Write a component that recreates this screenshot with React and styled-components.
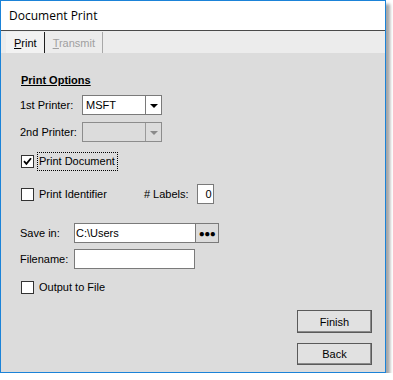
import React from "react";
import styled, { createGlobalStyle } from "styled-components";

const GlobalStyle = createGlobalStyle`
  html, body {
    margin: 0;
    padding: 0;
    background: #ffffff;
  }
  body {
    font-family: "Liberation Sans", Arial, sans-serif;
    font-size: 11px;
    color: #000;
  }
`;

const Window = styled.div`
  width: 384px;
  height: 371px;
  border: 1px solid #1b83d8;
  background: #dcdcdc;
  box-shadow: 4px 4px 3px rgba(0, 0, 0, 0.35);
  display: flex;
  flex-direction: column;
`;

const TitleBar = styled.div`
  height: 30px;
  background: #ffffff;
  border-bottom: 1px solid #4a4a4a;
  display: flex;
  align-items: center;
  padding-left: 8px;
  font-family: "Open Sans", "Liberation Sans", sans-serif;
  font-size: 12px;
  color: #000;
`;

const TabStrip = styled.div`
  height: 22px;
  background: #ececec;
  display: flex;
  align-items: stretch;
  padding-left: 5px;
`;

const Tab = styled.div`
  display: flex;
  align-items: center;
  padding: 0 7px 0 8px;
  border-right: 1px solid ${(p) => (p.$active ? "#1e1e1e" : "#a8a8a8")};
  background: ${(p) => (p.$active ? "#f2f2f2" : "transparent")};
  color: ${(p) => (p.$active ? "#000" : "#a0a0a0")};
  margin: 1px 0 0;
  font-size: 11px;
  u {
    text-decoration: underline;
  }
`;

const Content = styled.div`
  flex: 1;
  display: flex;
  flex-direction: column;
  padding: 21px 13px 7px 19px;
`;

const SectionTitle = styled.div`
  font-weight: bold;
  text-decoration: underline;
  line-height: 13px;
  margin-left: 1px;
`;

const Row = styled.div`
  display: flex;
  align-items: center;
  height: ${(p) => p.$h || 20}px;
  margin-top: ${(p) => p.$mt || 0}px;
`;

const Label = styled.div`
  width: ${(p) => p.$w}px;
  flex-shrink: 0;
`;

const Combo = styled.div`
  width: 78px;
  height: 18px;
  border: 1px solid ${(p) => (p.$disabled ? "#8c8c8c" : "#7a7a7a")};
  background: ${(p) => (p.$disabled ? "#dcdcdc" : "#ffffff")};
  display: flex;
  align-items: stretch;
`;

const ComboText = styled.div`
  flex: 1;
  display: flex;
  align-items: center;
  padding-left: 3px;
`;

const ComboButton = styled.div`
  width: 15px;
  border-left: 1px solid ${(p) => (p.$disabled ? "#9a9a9a" : "#7a7a7a")};
  display: flex;
  align-items: center;
  justify-content: center;
`;

const Arrow = styled.div`
  width: 0;
  height: 0;
  border-left: 4px solid transparent;
  border-right: 4px solid transparent;
  border-top: 4px solid ${(p) => (p.$disabled ? "#8a8a8a" : "#000")};
  margin-top: 1px;
`;

const Box = styled.div`
  width: 11px;
  height: 11px;
  border: 1px solid #333;
  background: #fff;
  flex-shrink: 0;
  margin-left: 1px;
  display: flex;
  align-items: center;
  justify-content: center;
`;

const CheckText = styled.div`
  margin-left: ${(p) => (p.$focus ? 3 : 5)}px;
  padding: ${(p) => (p.$focus ? "2px 2px 2px 1px" : "0")};
  border: ${(p) => (p.$focus ? "1px dotted #000" : "none")};
  line-height: 13px;
`;

const Spacer = styled.div`
  width: ${(p) => p.$w}px;
  flex-shrink: 0;
`;

const SmallInput = styled.div`
  width: 14px;
  height: 18px;
  border: 1px solid #7a7a7a;
  background: #fff;
  display: flex;
  align-items: center;
  justify-content: flex-end;
  padding-right: 1px;
  margin-left: 8px;
`;

const TextBox = styled.div`
  width: ${(p) => p.$w}px;
  height: 18px;
  border: 1px solid #7a7a7a;
  background: #fff;
  display: flex;
  align-items: center;
  padding-left: 1px;
`;

const BrowseButton = styled.div`
  width: 22px;
  height: 18px;
  border: 1px solid #7a7a7a;
  border-left: none;
  background: #dcdcdc;
  display: flex;
  align-items: center;
  justify-content: center;
  font-weight: bold;
  font-size: 10px;
  letter-spacing: -0.5px;
`;

const Buttons = styled.div`
  display: flex;
  flex-direction: column;
  align-items: flex-end;
  gap: 10px;
  margin-top: 14px;
`;

const Button = styled.div`
  width: 73px;
  height: ${(p) => p.$h}px;
  border: 1px solid #5a5a5a;
  box-shadow: inset -1px -1px 0 #8a8a8a;
  background: #e1e1e1;
  display: flex;
  align-items: center;
  justify-content: center;
  font-size: 11px;
`;

const Check = () => (
  <svg width="9" height="9" viewBox="0 0 9 9">
    <path d="M1 4.2 L3.4 6.8 L8 1.2" fill="none" stroke="#000" strokeWidth="1.8" />
  </svg>
);

const ComboBox = ({ value, disabled }) => (
  <Combo $disabled={disabled}>
    <ComboText>{value}</ComboText>
    <ComboButton $disabled={disabled}>
      <Arrow $disabled={disabled} />
    </ComboButton>
  </Combo>
);

export default function App() {
  return (
    <>
      <GlobalStyle />
      <Window>
        <TitleBar>Document Print</TitleBar>
        <TabStrip>
          <Tab $active>
            <span><u>P</u>rint</span>
          </Tab>
          <Tab>
            <span><u>T</u>ransmit</span>
          </Tab>
        </TabStrip>
        <Content>
          <SectionTitle>Print Options</SectionTitle>

          <Row $mt={8}>
            <Label $w={62}>1st Printer:</Label>
            <ComboBox value="MSFT" />
          </Row>
          <Row $mt={7}>
            <Label $w={62}>2nd Printer:</Label>
            <ComboBox disabled />
          </Row>

          <Row $mt={10} $h={18}>
            <Box>
              <Check />
            </Box>
            <CheckText $focus>Print Document</CheckText>
          </Row>

          <Row $mt={14}>
            <Box />
            <CheckText>Print Identifier</CheckText>
            <Spacer $w={37} />
            <span># Labels:</span>
            <SmallInput>0</SmallInput>
          </Row>

          <Row $mt={19}>
            <Label $w={54}>Save in:</Label>
            <TextBox $w={119}>C:\Users</TextBox>
            <BrowseButton>●●●</BrowseButton>
          </Row>
          <Row $mt={6}>
            <Label $w={54}>Filename:</Label>
            <TextBox $w={118} />
          </Row>

          <Row $mt={9} $h={18}>
            <Box />
            <CheckText>Output to File</CheckText>
          </Row>

          <Buttons>
            <Button $h={21}>Finish</Button>
            <Button $h={20}>Back</Button>
          </Buttons>
        </Content>
      </Window>
    </>
  );
}
